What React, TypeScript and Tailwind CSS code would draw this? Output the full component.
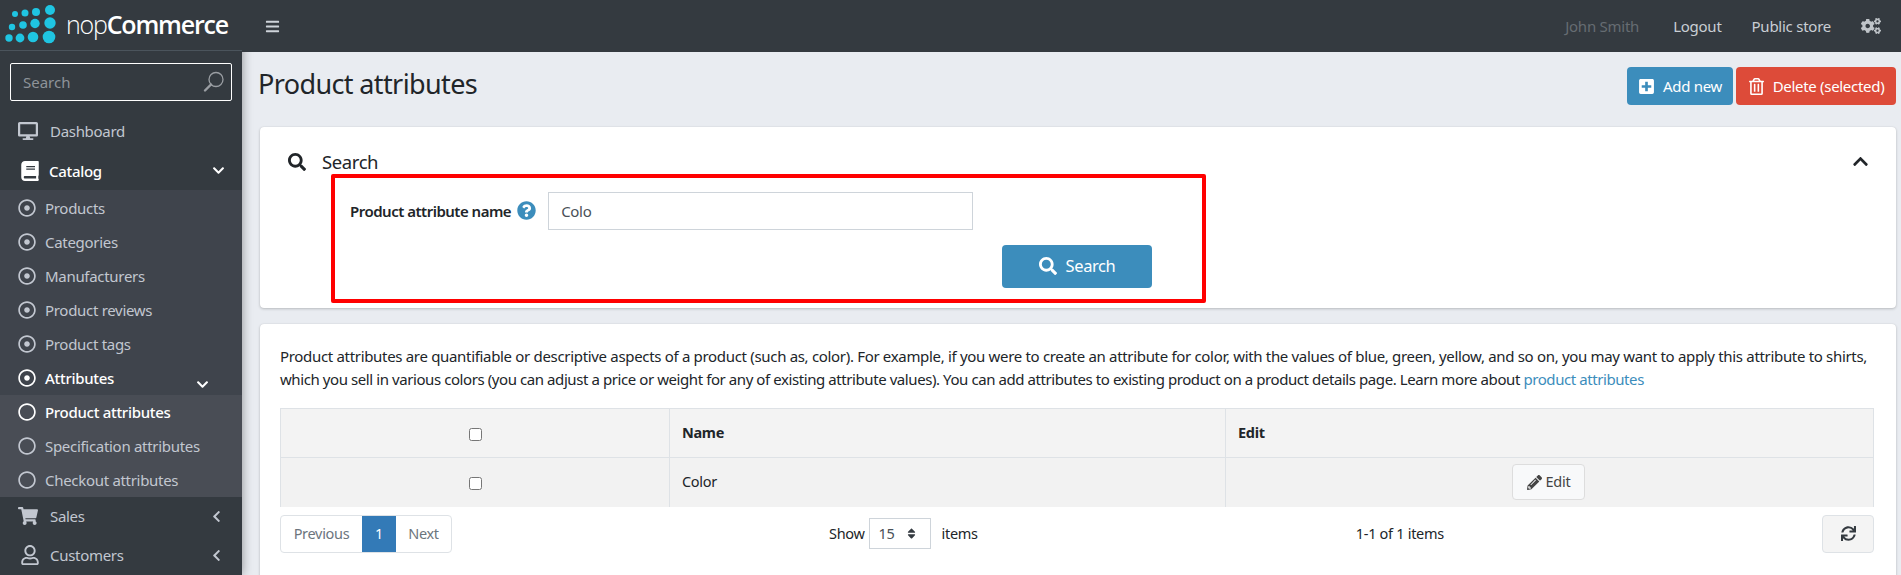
import React from "react";
import {
  FaBars, FaBook, FaChevronDown, FaChevronLeft, FaChevronUp, FaCogs, FaDesktop, FaPencilAlt, FaPlusSquare,
  FaQuestionCircle, FaRegCircle, FaRegDotCircle, FaRegTrashAlt, FaRegUser, FaSearch, FaShoppingCart, FaSort, FaSync,
} from "react-icons/fa";

const font = "font-['Noto_Sans',sans-serif]";

function Logo() {
  const dots: [number, number, number][] = [
    [50, 10, 5], [36, 12, 4], [25, 13, 3.5], [15, 14, 3],
    [50, 23, 5.7], [35, 23.5, 4.7], [23, 25, 3.8], [12, 27, 3.2],
    [49, 37, 6.3], [33, 37, 5.3], [20, 38, 4.4], [9, 38, 3.7],
  ];
  return (
    <div className="flex h-[52px] items-center border-b border-[#4b545c] pl-[4px]">
      <svg width="52" height="44" viewBox="4 3 52 44" className="shrink-0">
        {dots.map(([x, y, r], i) => (
          <circle key={i} cx={x} cy={y} r={r} fill="#1fc5e2" />
        ))}
      </svg>
      <span className="ml-[10px] text-[25px] leading-none tracking-[-1.2px] text-white font-['Open_Sans',sans-serif]">
        <span className="font-light">nop</span>
        <span className="font-semibold">Commerce</span>
      </span>
    </div>
  );
}

function TopItem({ icon, label, active, open, shifted }: { icon: React.ReactNode; label: string; active?: boolean; open?: boolean; shifted?: boolean }) {
  return (
    <div className={`flex h-[40px] items-center pl-[18px] pr-[17px] text-[15px] tracking-[-0.3px] ${shifted ? "pt-[2px]" : ""} ${active ? "font-medium text-white" : "text-[#c2c7d0]"}`}>
      <span className={`flex shrink-0 text-[20px] ${active ? "w-[31px]" : "w-[32px]"}`}>{icon}</span>
      <span className="flex-1">{label}</span>
      {open === true && <FaChevronDown className="text-[13px] text-white" />}
      {open === false && <FaChevronLeft className="mr-[2px] text-[13px] text-[#c2c7d0]" />}
    </div>
  );
}

function SubItem({ label, kind, current }: { label: string; kind: "dot" | "ring"; current?: boolean }) {
  const Icon = kind === "dot" ? FaRegDotCircle : FaRegCircle;
  return (
    <div className={`flex h-[34px] items-center pl-[18px] text-[15px] tracking-[-0.3px] ${current ? "font-medium text-white" : "text-[#c2c7d0]"}`}>
      <Icon className="mr-[9px] shrink-0 text-[18px]" />
      <span>{label}</span>
    </div>
  );
}

function Sidebar() {
  return (
    <aside className="flex h-full w-[242px] shrink-0 flex-col overflow-hidden bg-[#343a40] shadow-[0_0_10px_rgba(0,0,0,0.4)]">
      <Logo />
      <div className="px-[10px] pt-[12px] pb-[9px]">
        <div className="flex h-[38px] items-center justify-between rounded-[2px] border border-white pl-[12px] pr-[6px] text-[15px] text-[#8e9399]">
          <span>Search</span>
          <svg width="22" height="22" viewBox="0 0 22 22" fill="none" stroke="#9a9ea3">
            <circle cx="13" cy="8.5" r="7" strokeWidth="1.3" />
            <path d="M8 13.5 2 19.5" strokeWidth="2.4" strokeLinecap="round" />
          </svg>
        </div>
      </div>
      <div>
        <TopItem icon={<FaDesktop />} label="Dashboard" shifted />
        <TopItem icon={<FaBook className="ml-[2px]" />} label="Catalog" active open shifted />
      </div>
      <div className="bg-[#3f444c] pt-[1px]">
        <SubItem label="Products" kind="dot" />
        <SubItem label="Categories" kind="dot" />
        <SubItem label="Manufacturers" kind="dot" />
        <SubItem label="Product reviews" kind="dot" />
        <SubItem label="Product tags" kind="dot" />
        <div className="relative">
          <SubItem label="Attributes" kind="dot" current />
          <FaChevronDown className="absolute right-[33px] top-[17px] text-[13px] text-white" />
        </div>
        <div className="bg-[#494d55]">
          <SubItem label="Product attributes" kind="ring" current />
          <SubItem label="Specification attributes" kind="ring" />
          <SubItem label="Checkout attributes" kind="ring" />
        </div>
      </div>
      <TopItem icon={<FaShoppingCart />} label="Sales" open={false} />
      <TopItem icon={<FaRegUser className="ml-[2px]" />} label="Customers" open={false} />
    </aside>
  );
}

function Header() {
  return (
    <header className="flex h-[52px] shrink-0 items-center justify-between bg-[#343a40] pl-[23px] pr-[20px] text-[15px] tracking-[-0.25px] text-[#c9ced4]">
      <FaBars className="text-[15px] text-[#ced4da]" />
      <div className="flex items-center">
        <span className="text-[#666c72]">John Smith</span>
        <span className="ml-[34px]">Logout</span>
        <span className="ml-[30px]">Public store</span>
        <FaCogs className="ml-[30px] text-[20px] text-[#bfc4c9]" />
      </div>
    </header>
  );
}

function TitleBar() {
  return (
    <div className="flex items-start justify-between pl-[3px] pr-[5px] pt-[15px]">
      <h1 className="text-[27px] leading-[34px] tracking-[-0.62px] text-[#212529]">Product attributes</h1>
      <div className="flex gap-[3px] text-[15px] tracking-[-0.3px] text-white">
        <button className="flex h-[38px] w-[106px] items-center justify-center gap-[8px] rounded-[4px] bg-[#3c8dbc]">
          <FaPlusSquare className="text-[17px]" />Add new
        </button>
        <button className="flex h-[38px] w-[160px] items-center justify-center gap-[8px] rounded-[4px] bg-[#dd4b39]">
          <FaRegTrashAlt className="text-[17px]" />Delete (selected)
        </button>
      </div>
    </div>
  );
}

function SearchCard() {
  return (
    <section className="relative mx-[5px] mt-[22px] h-[181px] rounded-[4px] bg-white px-[28px] shadow-[0_0_1px_rgba(0,0,0,0.13),0_1px_3px_rgba(0,0,0,0.2)]">
      <div className="flex items-center justify-between pt-[21px] text-[#212529]">
        <div className="flex items-center text-[18.5px] tracking-[-0.4px]">
          <FaSearch className="mr-[16px] text-[18px]" />Search
        </div>
        <FaChevronUp className="mr-[-1px] text-[17px]" />
      </div>
      <div className="ml-[62px] mt-[16px] flex items-center">
        <label className="text-[15px] font-semibold tracking-[-0.5px] text-[#212529]">Product attribute name</label>
        <FaQuestionCircle className="ml-[6px] text-[19px] text-[#3c8dbc]" />
        <div className="ml-[12px] flex h-[38px] w-[425px] items-center border border-[#ced4da] px-[12px] text-[15px] tracking-[-0.3px] text-[#495057]">Colo</div>
      </div>
      <button className="ml-[714px] mt-[15px] flex h-[43px] w-[150px] items-center justify-center gap-[9px] rounded-[4px] bg-[#3c8dbc] text-[16.5px] tracking-[-0.4px] text-white">
        <FaSearch className="text-[18px]" />Search
      </button>
      <div className="pointer-events-none absolute left-[71px] top-[47px] h-[129px] w-[875px] rounded-[2px] border-[4px] border-[#ff0000]" />
    </section>
  );
}

function Grid() {
  const cell = "border-l border-t border-[#dee2e6] px-[12px] align-middle";
  const box = <input type="checkbox" className="h-[13px] w-[13px] align-middle" readOnly />;
  return (
    <section className="mx-[5px] mt-[16px] h-[300px] rounded-[4px] bg-white px-[20px] pt-[21px] text-[#212529] shadow-[0_0_1px_rgba(0,0,0,0.13),0_1px_3px_rgba(0,0,0,0.2)]">
      <p className="text-[15px] leading-[23px] tracking-[-0.32px]">
        Product attributes are quantifiable or descriptive aspects of a product (such as, color). For example, if you were to create an attribute for color, with the values of blue, green, yellow, and so on, you may want to apply this attribute to shirts, <span className="tracking-[-0.42px]">which you sell in various colors (you can adjust a price or weight for any of existing attribute values). You can add attributes to existing product on a product details page. Learn more about </span><span className="tracking-[-0.42px] text-[#3c8dbc]">product attributes</span>
      </p>
      <table className="mt-[17px] w-[1594px] table-fixed border-collapse text-[14.5px] tracking-[-0.3px]">
        <colgroup>
          <col className="w-[389px]" />
          <col className="w-[556px]" />
          <col />
        </colgroup>
        <tbody>
          <tr className="h-[49px] bg-[#f3f3f3] font-bold">
            <td className={`${cell} text-center`}>{box}</td>
            <td className={cell}>Name</td>
            <td className={`${cell} border-r`}>Edit</td>
          </tr>
          <tr className="h-[49px] bg-[#f2f2f2]">
            <td className={`${cell} text-center`}>{box}</td>
            <td className={cell}>Color</td>
            <td className={`${cell} border-r text-center`}>
              <span className="mr-[2px] inline-flex h-[36px] w-[73px] items-center justify-center gap-[4px] rounded-[4px] border border-[#dddddd] bg-[#f8f9fa] text-[#444444]">
                <FaPencilAlt className="text-[15px]" />Edit
              </span>
            </td>
          </tr>
        </tbody>
      </table>
      <div className="mt-[8px] flex h-[38px] w-[1594px] items-center text-[14.5px] tracking-[-0.3px]">
        <div className="flex h-[38px] w-[172px] items-stretch overflow-hidden rounded-[4px] border border-[#dee2e6] text-[#6c757d]">
          <span className="flex w-[81px] items-center justify-center">Previous</span>
          <span className="flex w-[34px] items-center justify-center bg-[#337ab7] text-white">1</span>
          <span className="flex flex-1 items-center justify-center">Next</span>
        </div>
        <div className="ml-[377px] flex items-center">
          Show
          <span className="ml-[4px] flex h-[31px] w-[62px] items-center justify-between border border-[#ced4da] pl-[9px] pr-[12px] text-[#495057]">
            15<FaSort className="text-[13px] text-[#343a40]" />
          </span>
          <span className="ml-[11px]">items</span>
        </div>
        <span className="ml-[378px]">1-1 of 1 items</span>
        <span className="ml-auto flex h-[38px] w-[52px] items-center justify-center rounded-[4px] border border-[#dee2e6] bg-[#f4f4f4] text-[#343a40]">
          <FaSync className="text-[15px]" />
        </span>
      </div>
    </section>
  );
}

export default function App() {
  return (
    <div className={`flex h-[575px] w-[1901px] overflow-hidden bg-[#e9ecf1] ${font}`}>
      <Sidebar />
      <main className="flex min-w-0 flex-1 flex-col overflow-hidden">
        <Header />
        <div className="pl-[13px]">
          <TitleBar />
          <SearchCard />
          <Grid />
        </div>
      </main>
    </div>
  );
}
